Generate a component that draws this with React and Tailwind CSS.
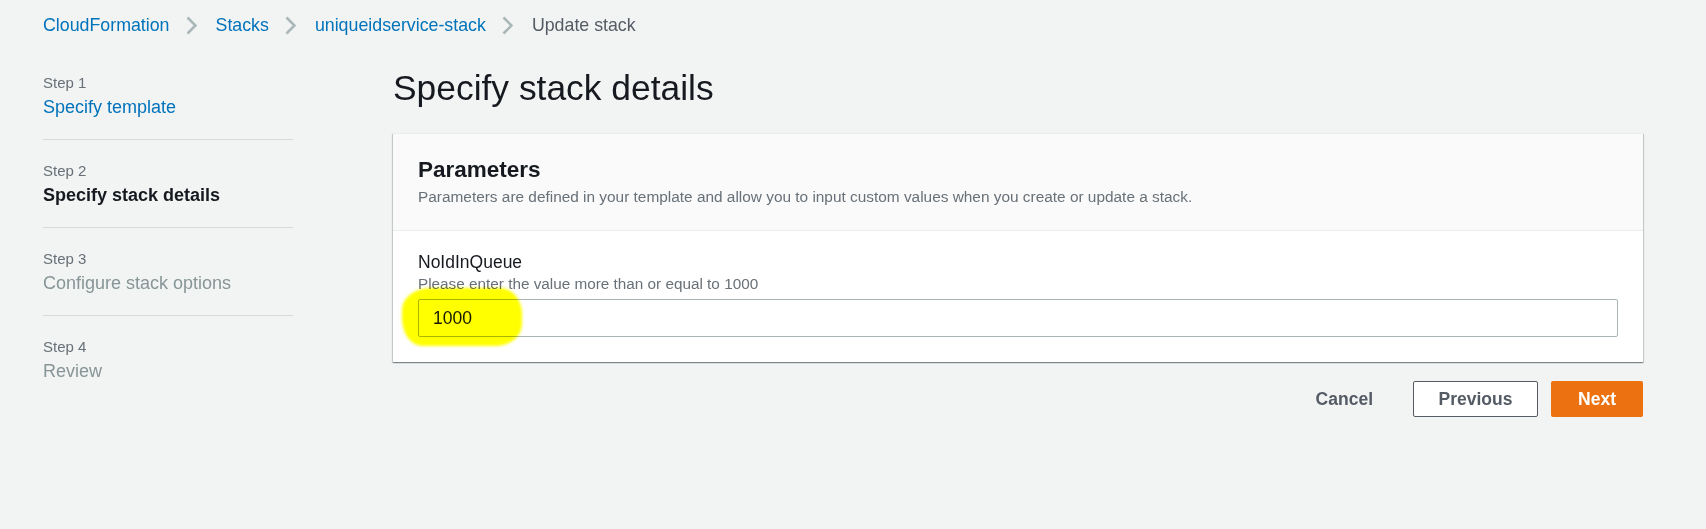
import React from "react";

function Chevron() {
  return (
    <svg
      width="11"
      height="19"
      viewBox="0 0 11 19"
      className="ml-[16px] mr-[19px] shrink-0"
      fill="none"
    >
      <path d="M1.5 1.5 L9.5 9.5 L1.5 17.5" stroke="#aab7b8" strokeWidth="2.6" />
    </svg>
  );
}

function Step({ label, title, kind, first, last }) {
  const titleClass =
    kind === "link"
      ? "text-[#0073bb]"
      : kind === "active"
      ? "text-[#16191f] font-bold text-[17.5px]"
      : "text-[#879596]";
  return (
    <li
      className={
        (first ? "" : "pt-[21px] ") +
        (last ? "" : "pb-[20px] border-b border-[#d5dbdb]")
      }
    >
      <div className="text-[15px] leading-[20px] text-[#687078]">{label}</div>
      <div className={"mt-[2px] text-[18px] leading-[24px] " + titleClass}>{title}</div>
    </li>
  );
}

export default function App() {
  return (
    <div className="min-h-screen bg-[#f2f3f3] font-['Liberation_Sans',Arial,sans-serif] text-[#16191f]">
      <div className="pl-[43px] pt-[13px] pb-[11px]">
        <nav className="flex items-center h-[24px] text-[17.8px] leading-[24px]">
          <a className="text-[#0073bb]">CloudFormation</a>
          <Chevron />
          <a className="text-[#0073bb]">Stacks</a>
          <Chevron />
          <a className="text-[#0073bb]">uniqueidservice-stack</a>
          <Chevron />
          <span className="text-[#545b64]">Update stack</span>
        </nav>
      </div>

      <div className="flex">
        <aside className="w-[393px] shrink-0 pl-[43px] pt-[25px]">
          <ul className="w-[250px]">
            <Step first label="Step 1" title="Specify template" kind="link" />
            <Step label="Step 2" title="Specify stack details" kind="active" />
            <Step label="Step 3" title="Configure stack options" kind="disabled" />
            <Step last label="Step 4" title="Review" kind="disabled" />
          </ul>
        </aside>

        <main className="flex-1 pr-[63px] pt-[18px]">
          <h1 className="text-[35.4px] leading-[44px] font-normal text-[#16191f]">
            Specify stack details
          </h1>

          <div className="mt-[23px] bg-white border-t border-[#eaeded] shadow-[0_1px_1px_0_rgba(0,28,36,0.3),1px_1px_1px_0_rgba(0,28,36,0.15),-1px_1px_1px_0_rgba(0,28,36,0.15)]">
            <div className="bg-[#fafafa] px-[25px] pt-[22px] pb-[23px] border-b border-[#eaeded]">
              <h2 className="text-[22.5px] leading-[28px] font-bold text-[#16191f]">Parameters</h2>
              <p className="mt-[3px] text-[15.4px] leading-[20px] text-[#687078]">
                Parameters are defined in your template and allow you to input custom values when you create or update a stack.
              </p>
            </div>
            <div className="px-[25px] pt-[19px] pb-[25px]">
              <label className="block text-[17.5px] leading-[24px] text-[#16191f]">NoIdInQueue</label>
              <p className="text-[15.3px] leading-[20px] text-[#687078]">
                Please enter the value more than or equal to 1000
              </p>
              <div className="relative mt-[5px]">
                <input
                  readOnly
                  defaultValue="1000"
                  className="block w-full h-[38px] bg-white border border-[#aab7b8] rounded-[2px] pl-[14px] text-[17.5px] text-[#16191f] outline-none font-['Liberation_Sans',Arial,sans-serif]"
                />
                <div className="pointer-events-none absolute left-[-16px] top-[-11px] w-[120px] h-[58px] bg-[#ffff00] mix-blend-multiply blur-[1.5px] rounded-[28px_22px_26px_20px/22px_26px_22px_28px]" />
              </div>
            </div>
          </div>

          <div className="mt-[19px] flex justify-end items-center">
            <button className="h-[36px] px-[20px] text-[17.5px] font-bold text-[#545b64]">Cancel</button>
            <button className="ml-[20px] h-[36px] w-[125px] bg-white border border-[#545b64] rounded-[2px] text-[17.5px] font-bold text-[#545b64]">
              Previous
            </button>
            <button className="ml-[13px] h-[36px] w-[92px] bg-[#ec7211] rounded-[2px] text-[17.5px] font-bold text-white">
              Next
            </button>
          </div>
        </main>
      </div>
    </div>
  );
}
